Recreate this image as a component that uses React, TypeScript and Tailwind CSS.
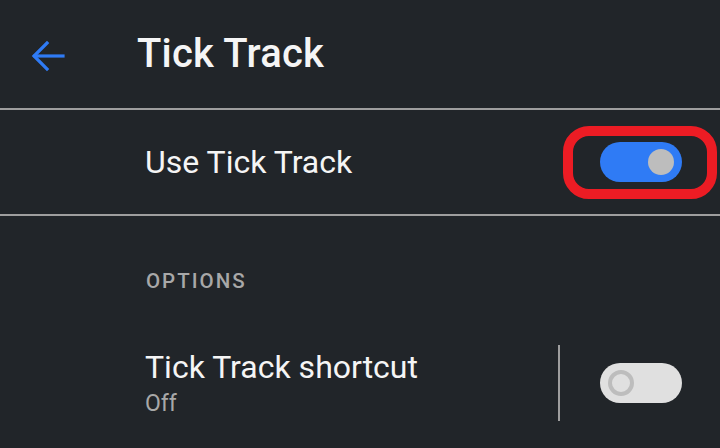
import React, { useState } from 'react';

// 开关组件
function Toggle({ on, onClick }: { on: boolean; onClick?: () => void }) {
  return (
    <button
      onClick={onClick}
      className={`relative w-[82px] h-[40px] rounded-full flex items-center px-[8px] ${
        on ? 'bg-[#2f7bf5] justify-end' : 'bg-[#e0e0e0] justify-start'
      }`}
    >
      {on ? (
        <span className="block w-[26px] h-[26px] rounded-full bg-[#bdbdbd]" />
      ) : (
        <span className="block w-[26px] h-[26px] rounded-full border-[4px] border-[#bdbdbd] bg-[#e0e0e0]" />
      )}
    </button>
  );
}

export default function App() {
  const [enabled, setEnabled] = useState(true);
  const [shortcut, setShortcut] = useState(false);

  return (
    <div className="w-[720px] h-[448px] overflow-hidden bg-[#212529] text-[#f5f5f5] font-['Roboto',sans-serif]">
      {/* 顶栏 */}
      <header className="h-[108px] flex items-center border-b-2 border-[#9e9e9e] box-content">
        <button className="w-[48px] h-[48px] ml-[24px] mt-[4px] text-[#2f7bf5]">
          <svg viewBox="0 0 24 24" width="48" height="48" fill="none" stroke="currentColor" strokeWidth="1.6" strokeLinecap="square">
            <path d="M19.5 12H5.5" />
            <path d="M11.5 5.5L5 12l6.5 6.5" />
          </svg>
        </button>
        <h1 className="ml-[65px] text-[40px] font-medium leading-none tracking-[0.2px]">Tick Track</h1>
      </header>

      {/* 主开关 */}
      <div className="h-[104px] flex items-center border-b-2 border-[#9e9e9e] box-content">
        <span className="ml-[145px] flex-1 text-[32px] leading-none">Use Tick Track</span>
        <div className="relative mr-[38px]">
          <Toggle on={enabled} onClick={() => setEnabled(v => !v)} />
          <div className="absolute -left-[37px] -right-[35px] -top-[16px] -bottom-[17px] rounded-[26px] border-[10px] border-[#ec1c24] pointer-events-none" />
        </div>
      </div>

      {/* 选项 */}
      <div className="pt-[55px] pl-[146px] text-[20.5px] font-medium tracking-[2px] text-[#a8a8a8] leading-none">
        OPTIONS
      </div>

      <div className="mt-[53px] flex items-center">
        <div className="ml-[145px] flex-1 flex flex-col">
          <span className="text-[32px] leading-none">Tick Track shortcut</span>
          <span className="mt-[9px] text-[23px] leading-none text-[#a8a8a8]">Off</span>
        </div>
        <div className="w-[2px] h-[76px] bg-[#9e9e9e] mr-[40px]" />
        <div className="mr-[38px]">
          <Toggle on={shortcut} onClick={() => setShortcut(v => !v)} />
        </div>
      </div>
    </div>
  );
}
